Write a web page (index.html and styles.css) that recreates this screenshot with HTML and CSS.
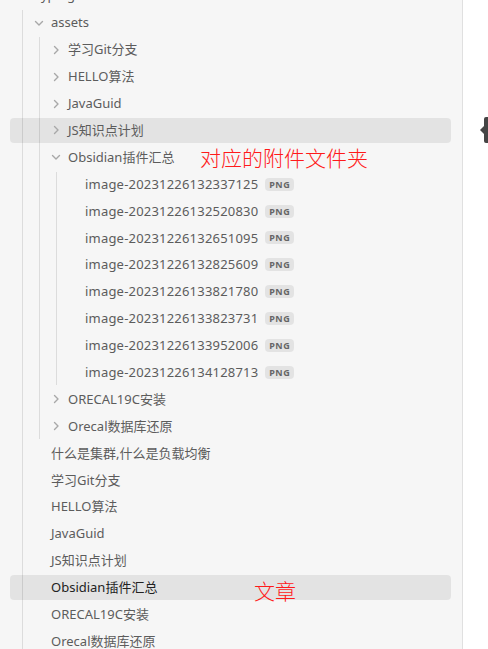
FILE: index.html
```html
<!DOCTYPE html>
<html lang="zh-CN">
<head>
<meta charset="utf-8">
<title>Files</title>
<link rel="stylesheet" href="styles.css">
</head>
<body>
<div class="app">
  <aside class="sidebar">
    <div class="tree">
      <div class="folder">
        <div class="row d0"><svg class="chev" viewBox="0 0 16 16"><path d="M4.5 6.5 L8 10 L11.5 6.5"/></svg><span class="name">Typing</span></div>
        <div class="children c1">
          <div class="folder">
            <div class="row d1"><svg class="chev" viewBox="0 0 16 16"><path d="M4.5 6.5 L8 10 L11.5 6.5"/></svg><span class="name">assets</span></div>
            <div class="children c2">
              <div class="row d2"><svg class="chev" viewBox="0 0 16 16"><path d="M6.5 4.5 L10 8 L6.5 11.5"/></svg><span class="name">学习Git分支</span></div>
              <div class="row d2"><svg class="chev" viewBox="0 0 16 16"><path d="M6.5 4.5 L10 8 L6.5 11.5"/></svg><span class="name">HELLO算法</span></div>
              <div class="row d2"><svg class="chev" viewBox="0 0 16 16"><path d="M6.5 4.5 L10 8 L6.5 11.5"/></svg><span class="name">JavaGuid</span></div>
              <div class="row d2 hover"><svg class="chev" viewBox="0 0 16 16"><path d="M6.5 4.5 L10 8 L6.5 11.5"/></svg><span class="name">JS知识点计划</span></div>
              <div class="folder">
                <div class="row d2"><svg class="chev" viewBox="0 0 16 16"><path d="M4.5 6.5 L8 10 L11.5 6.5"/></svg><span class="name">Obsidian插件汇总</span><span class="note note-folder">对应的附件文件夹</span></div>
                <div class="children c3">
                  <div class="row d3"><span class="name file-name">image-20231226132337125</span><span class="tag">png</span></div>
                  <div class="row d3"><span class="name file-name">image-20231226132520830</span><span class="tag">png</span></div>
                  <div class="row d3"><span class="name file-name">image-20231226132651095</span><span class="tag">png</span></div>
                  <div class="row d3"><span class="name file-name">image-20231226132825609</span><span class="tag">png</span></div>
                  <div class="row d3"><span class="name file-name">image-20231226133821780</span><span class="tag">png</span></div>
                  <div class="row d3"><span class="name file-name">image-20231226133823731</span><span class="tag">png</span></div>
                  <div class="row d3"><span class="name file-name">image-20231226133952006</span><span class="tag">png</span></div>
                  <div class="row d3"><span class="name file-name">image-20231226134128713</span><span class="tag">png</span></div>
                </div>
              </div>
              <div class="row d2"><svg class="chev" viewBox="0 0 16 16"><path d="M6.5 4.5 L10 8 L6.5 11.5"/></svg><span class="name">ORECAL19C安装</span></div>
              <div class="row d2"><svg class="chev" viewBox="0 0 16 16"><path d="M6.5 4.5 L10 8 L6.5 11.5"/></svg><span class="name">Orecal数据库还原</span></div>
            </div>
          </div>
          <div class="row d1"><span class="name">什么是集群,什么是负载均衡</span></div>
          <div class="row d1"><span class="name">学习Git分支</span></div>
          <div class="row d1"><span class="name">HELLO算法</span></div>
          <div class="row d1"><span class="name">JavaGuid</span></div>
          <div class="row d1"><span class="name">JS知识点计划</span></div>
          <div class="row d1 active"><span class="name">Obsidian插件汇总</span><span class="note note-file">文章</span></div>
          <div class="row d1"><span class="name">ORECAL19C安装</span></div>
          <div class="row d1"><span class="name">Orecal数据库还原</span></div>
        </div>
      </div>
    </div>
  </aside>
  <main class="pane">
    <svg class="tip" viewBox="0 0 9 26"><path d="M9 0 H7 Q5 0 5 2 V9 L1 13 L5 17 V24 Q5 26 7 26 H9 Z"/></svg>
  </main>
</div>
</body>
</html>
```

FILE: styles.css
```css
html, body {
  margin: 0;
  padding: 0;
  height: 100%;
  overflow: hidden;
}

body {
  font-family: "Noto Sans", "Noto Sans CJK SC", sans-serif;
  font-size: 13px;
  color: #5c5c5c;
  background: #ffffff;
}

.app {
  display: flex;
  height: 100%;
}

.sidebar {
  width: 462px;
  flex: none;
  background: #f6f6f6;
  border-right: 1px solid #e0e0e0;
  overflow: hidden;
}

.tree {
  padding: 0 11px 0 10px;
  margin-top: -16.5px;
}

.children {
  border-left: 1px solid #dcdcdc;
}

.c1 { margin-left: 12px; }
.c2 { margin-left: 16px; }
.c3 { margin-left: 16px; }

.row {
  position: relative;
  display: flex;
  align-items: center;
  height: 24.9px;
  margin-bottom: 2px;
  border-radius: 4px;
  line-height: 16.9px;
  white-space: nowrap;
}

.d0 { padding-left: 24px; }
.d1 { margin-left: -13px; padding-left: 41px; }
.d2 { margin-left: -30px; padding-left: 58px; }
.d3 { margin-left: -47px; padding-left: 75px; }

.hover,
.active {
  background: rgba(0, 0, 0, 0.075);
}

.active {
  color: #222222;
}

.file-name {
  letter-spacing: 0.2px;
}

.chev {
  flex: none;
  width: 16px;
  height: 16px;
  margin-left: -20px;
  margin-right: 4px;
}

.chev path {
  fill: none;
  stroke: #a8a8a8;
  stroke-width: 1.4;
  stroke-linecap: round;
  stroke-linejoin: round;
}

.tag {
  margin-left: 7px;
  padding: 2px 4px;
  border-radius: 4px;
  background: rgba(0, 0, 0, 0.075);
  font-size: 9px;
  font-weight: 700;
  line-height: 9px;
  letter-spacing: 0.05em;
  text-transform: uppercase;
  color: #666666;
}

.note {
  position: absolute;
  font-family: "Noto Sans CJK SC", sans-serif;
  font-weight: 300;
  font-size: 21px;
  line-height: 25px;
  color: #ff1a1a;
}

.note-folder {
  left: 190px;
  top: 0;
}

.note-file {
  left: 244px;
  top: 3px;
}

.pane {
  position: relative;
  flex: 1;
  background: #ffffff;
}

.tip {
  position: absolute;
  left: 16px;
  top: 117px;
  width: 9px;
  height: 26px;
}

.tip path {
  fill: #454545;
}
```
